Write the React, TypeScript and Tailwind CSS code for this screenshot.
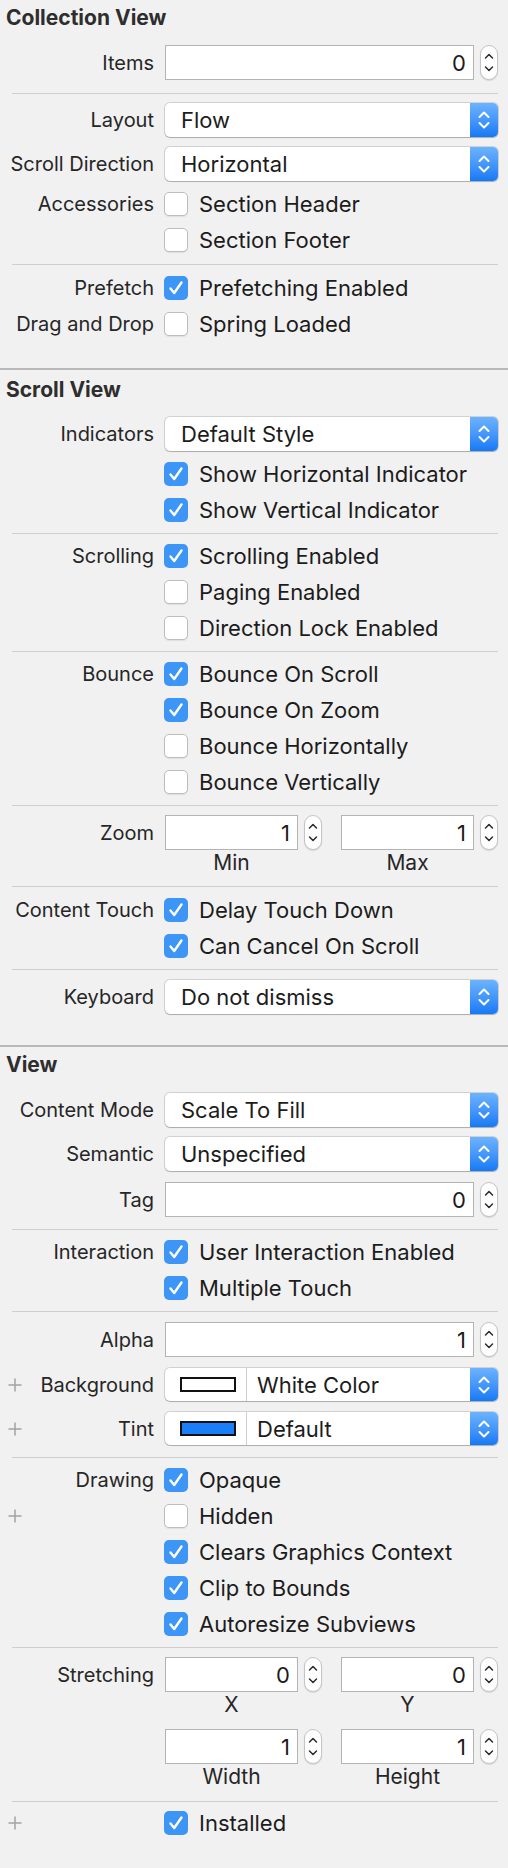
import React from "react";

function Plus() {
  return (
    <svg width="14" height="14" viewBox="0 0 14 14" className="shrink-0">
      <path d="M7 0.5V13.5M0.5 7H13.5" stroke="#a3a3a3" strokeWidth="1.5" />
    </svg>
  );
}

function Row({ label, plus, className, children }: { label?: string; plus?: boolean; className?: string; children: React.ReactNode }) {
  return (
    <div className={`flex items-center ${className || ""}`}>
      <div className="w-[154px] shrink-0 flex items-center pl-[8px]">
        {plus && <Plus />}
        <span className="ml-auto whitespace-nowrap">{label}</span>
      </div>
      <div className="ml-[11px] w-[333px] flex items-center">{children}</div>
    </div>
  );
}

function Sep({ className }: { className?: string }) {
  return <div className={`ml-[12px] w-[486px] h-px bg-[#cfcfcf] ${className || ""}`} />;
}

function SectionSep({ className }: { className?: string }) {
  return <div className={`w-full h-[2px] bg-[#b9b9b9] ${className || ""}`} />;
}

function Stepper() {
  return (
    <div className="w-[18px] h-[35px] rounded-[9px] bg-white border border-[#c4c4c4] shadow-[0_1px_1px_rgba(0,0,0,0.12)] shrink-0">
      <svg width="16" height="33" viewBox="0 0 16 33">
        <path d="M4.5 12L8 8.5L11.5 12" stroke="#2a2a2a" strokeWidth="1.5" fill="none" strokeLinecap="round" strokeLinejoin="round" />
        <path d="M4.5 21L8 24.5L11.5 21" stroke="#2a2a2a" strokeWidth="1.5" fill="none" strokeLinecap="round" strokeLinejoin="round" />
      </svg>
    </div>
  );
}

function NumField({ value, wide }: { value: string; wide?: boolean }) {
  return (
    <div className="flex items-center">
      <div className={`${wide ? "w-[309px]" : "w-[133px]"} h-[35px] bg-white border border-[#b4b4b4] flex items-center justify-end pr-[7px] text-[22px] text-[#1c1c1c]`}>
        {value}
      </div>
      <div className="ml-[6px]">
        <Stepper />
      </div>
    </div>
  );
}

function PopupArrows() {
  return (
    <div className="w-[28px] h-full rounded-r-[5px] bg-gradient-to-b from-[#6cb3ff] to-[#1479f5] flex items-center justify-center shrink-0">
      <svg width="28" height="34" viewBox="0 0 28 34">
        <path d="M9.5 14L14 9.5L18.5 14" stroke="white" strokeWidth="2" fill="none" strokeLinecap="round" strokeLinejoin="round" />
        <path d="M9.5 20L14 24.5L18.5 20" stroke="white" strokeWidth="2" fill="none" strokeLinecap="round" strokeLinejoin="round" />
      </svg>
    </div>
  );
}

function Popup({ value, swatch, h }: { value: string; swatch?: string; h?: string }) {
  return (
    <div className={`w-[333px] ${h || "h-[34px]"} rounded-[5px] bg-white shadow-[0_0_0_1px_rgba(0,0,0,0.13),0_1px_1px_rgba(0,0,0,0.18)] flex items-stretch text-[22px] text-[#1c1c1c]`}>
      {swatch ? (
        <>
          <div className="w-[82px] flex items-center pl-[15px] border-r border-[#cfcfcf]">
            <div className={`w-[56px] h-[15px] border-2 border-[#111] ${swatch}`} />
          </div>
          <div className="flex-1 flex items-center pl-[10px]">{value}</div>
        </>
      ) : (
        <div className="flex-1 flex items-center pl-[16px]">{value}</div>
      )}
      <PopupArrows />
    </div>
  );
}

function Check({ label, checked }: { label: string; checked?: boolean }) {
  return (
    <div className="flex items-center -ml-px">
      {checked ? (
        <div className="w-[24px] h-[24px] rounded-[5px] bg-[#3d96f6] flex items-center justify-center shrink-0">
          <svg width="24" height="24" viewBox="0 0 24 24">
            <path d="M6.5 12.5L10.2 17L17.5 6.5" stroke="white" strokeWidth="2.4" fill="none" strokeLinecap="round" strokeLinejoin="round" />
          </svg>
        </div>
      ) : (
        <div className="w-[24px] h-[24px] rounded-[5px] bg-white border border-[#bdbdbd] shadow-[0_1px_1px_rgba(0,0,0,0.08)] shrink-0" />
      )}
      <span className="ml-[11px] text-[22px] text-[#1c1c1c] whitespace-nowrap">{label}</span>
    </div>
  );
}

function PairRow({ label, a, b, la, lb, className }: { label?: string; a: string; b: string; la: string; lb: string; className?: string }) {
  return (
    <div className={className}>
      <Row label={label} className="h-[35px]">
        <NumField value={a} />
        <div className="ml-[19px]">
          <NumField value={b} />
        </div>
      </Row>
      <div className="flex h-[24px] items-center text-[21px]">
        <div className="ml-[165px] w-[133px] text-center">{la}</div>
        <div className="ml-[43px] w-[133px] text-center">{lb}</div>
      </div>
    </div>
  );
}

function Heading({ title, className }: { title: string; className?: string }) {
  return (
    <div className={`pl-[6px] flex items-center font-bold text-[21px] text-[#2e2e2e] ${className || ""}`}>{title}</div>
  );
}

export default function App() {
  return (
    <div className="w-[508px] min-h-[1868px] bg-[#f1f1f1] text-[#262626] text-[20px] font-[Inter,sans-serif] leading-none flex flex-col">
      {/* Collection View */}
      <Heading title="Collection View" className="h-[34px]" />
      <Row label="Items" className="mt-[11px] h-[35px]">
        <NumField value="0" wide />
      </Row>
      <Sep className="mt-[13px]" />
      <Row label="Layout" className="mt-[9px] h-[34px]">
        <Popup value="Flow" />
      </Row>
      <Row label="Scroll Direction" className="mt-[10px] h-[34px]">
        <Popup value="Horizontal" />
      </Row>
      <Row label="Accessories" className="mt-[5px] h-[36px]">
        <Check label="Section Header" />
      </Row>
      <Row className="h-[36px]">
        <Check label="Section Footer" />
      </Row>
      <Sep className="mt-[6px]" />
      <Row label="Prefetch" className="mt-[5px] h-[36px]">
        <Check label="Prefetching Enabled" checked />
      </Row>
      <Row label="Drag and Drop" className="h-[36px]">
        <Check label="Spring Loaded" />
      </Row>
      <SectionSep className="mt-[26px]" />

      {/* Scroll View */}
      <Heading title="Scroll View" className="h-[39px]" />
      <Row label="Indicators" className="mt-[8px] h-[34px]">
        <Popup value="Default Style" />
      </Row>
      <Row className="mt-[5px] h-[36px]">
        <Check label="Show Horizontal Indicator" checked />
      </Row>
      <Row className="h-[36px]">
        <Check label="Show Vertical Indicator" checked />
      </Row>
      <Sep className="mt-[5px]" />
      <Row label="Scrolling" className="mt-[4px] h-[36px]">
        <Check label="Scrolling Enabled" checked />
      </Row>
      <Row className="h-[36px]">
        <Check label="Paging Enabled" />
      </Row>
      <Row className="h-[36px]">
        <Check label="Direction Lock Enabled" />
      </Row>
      <Sep className="mt-[5px]" />
      <Row label="Bounce" className="mt-[4px] h-[36px]">
        <Check label="Bounce On Scroll" checked />
      </Row>
      <Row className="h-[36px]">
        <Check label="Bounce On Zoom" checked />
      </Row>
      <Row className="h-[36px]">
        <Check label="Bounce Horizontally" />
      </Row>
      <Row className="h-[36px]">
        <Check label="Bounce Vertically" />
      </Row>
      <Sep className="mt-[5px]" />
      <PairRow label="Zoom" a="1" b="1" la="Min" lb="Max" className="mt-[9px]" />
      <Sep className="mt-[12px]" />
      <Row label="Content Touch" className="mt-[5px] h-[36px]">
        <Check label="Delay Touch Down" checked />
      </Row>
      <Row className="h-[36px]">
        <Check label="Can Cancel On Scroll" checked />
      </Row>
      <Sep className="mt-[5px]" />
      <Row label="Keyboard" className="mt-[10px] h-[34px]">
        <Popup value="Do not dismiss" />
      </Row>
      <SectionSep className="mt-[31px]" />

      {/* View */}
      <Heading title="View" className="h-[35px]" />
      <Row label="Content Mode" className="mt-[11px] h-[34px]">
        <Popup value="Scale To Fill" />
      </Row>
      <Row label="Semantic" className="mt-[10px] h-[34px]">
        <Popup value="Unspecified" />
      </Row>
      <Row label="Tag" className="mt-[11px] h-[35px]">
        <NumField value="0" wide />
      </Row>
      <Sep className="mt-[12px]" />
      <Row label="Interaction" className="mt-[4px] h-[36px]">
        <Check label="User Interaction Enabled" checked />
      </Row>
      <Row className="h-[36px]">
        <Check label="Multiple Touch" checked />
      </Row>
      <Sep className="mt-[5px]" />
      <Row label="Alpha" className="mt-[10px] h-[35px]">
        <NumField value="1" wide />
      </Row>
      <Row label="Background" plus className="mt-[11px] h-[33px]">
        <Popup value="White Color" swatch="bg-white" h="h-[33px]" />
      </Row>
      <Row label="Tint" plus className="mt-[11px] h-[33px]">
        <Popup value="Default" swatch="bg-[#1a7ef8]" h="h-[33px]" />
      </Row>
      <Sep className="mt-[12px]" />
      <Row label="Drawing" className="mt-[4px] h-[36px]">
        <Check label="Opaque" checked />
      </Row>
      <Row plus className="h-[36px]">
        <Check label="Hidden" />
      </Row>
      <Row className="h-[36px]">
        <Check label="Clears Graphics Context" checked />
      </Row>
      <Row className="h-[36px]">
        <Check label="Clip to Bounds" checked />
      </Row>
      <Row className="h-[36px]">
        <Check label="Autoresize Subviews" checked />
      </Row>
      <Sep className="mt-[5px]" />
      <PairRow label="Stretching" a="0" b="0" la="X" lb="Y" className="mt-[9px]" />
      <PairRow a="1" b="1" la="Width" lb="Height" className="mt-[13px]" />
      <Sep className="mt-[13px]" />
      <Row plus className="mt-[3px] h-[36px]">
        <Check label="Installed" checked />
      </Row>
    </div>
  );
}
